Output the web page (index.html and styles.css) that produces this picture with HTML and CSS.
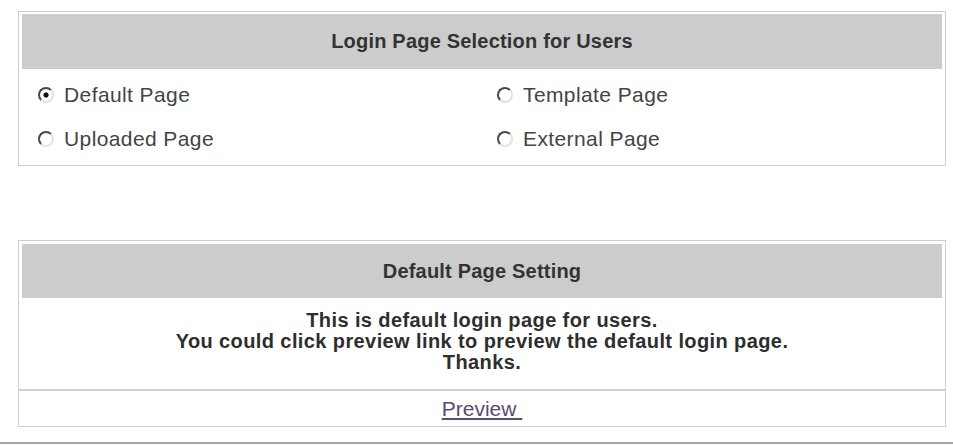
FILE: index.html
```html
<!DOCTYPE html>
<html lang="en">
<head>
    <meta charset="UTF-8">
    <meta name="viewport" content="width=device-width, initial-scale=1.0">
    <title>Login Page Selection</title>
    <link rel="stylesheet" href="styles.css">
</head>
<body>
    <div class="page">
        <div class="panel">
            <div class="panel-head">Login Page Selection for Users</div>
            <div class="choices">
                <label class="choice"><input type="radio" name="loginPage" value="default" checked> Default Page</label>
                <label class="choice"><input type="radio" name="loginPage" value="template"> Template Page</label>
                <label class="choice"><input type="radio" name="loginPage" value="uploaded"> Uploaded Page</label>
                <label class="choice"><input type="radio" name="loginPage" value="external"> External Page</label>
            </div>
        </div>

        <div class="panel panel-setting">
            <div class="panel-head">Default Page Setting</div>
            <div class="notice">
                This is default login page for users.<br>
                You could click preview link to preview the default login page.<br>
                Thanks.
            </div>
            <div class="preview-row">
                <a href="#" class="preview-link">Preview&nbsp;</a>
            </div>
        </div>
    </div>
    <div class="page-rule"></div>
</body>
</html>
```

FILE: styles.css
```css
* {
    margin: 0;
    padding: 0;
    box-sizing: border-box;
}

body {
    font-family: "Liberation Sans", Arial, sans-serif;
    background-color: white;
    color: #444;
}

.page {
    padding: 11px 0 0 18px;
}

.panel {
    width: 928px;
    border: 1px solid #cfcfcf;
}

.panel-setting {
    margin-top: 74px;
}

.panel-head {
    margin: 2px 3px 0 3px;
    height: 55px;
    background-color: #cccccc;
    display: flex;
    align-items: center;
    justify-content: center;
    font-size: 20px;
    font-weight: bold;
    letter-spacing: 0.2px;
    color: #333;
}

.panel-setting .panel-head {
    margin-top: 3px;
    height: 54px;
}

/* radio options, two per row */
.choices {
    display: grid;
    grid-template-columns: 459px 1fr;
    grid-auto-rows: 44px;
    padding: 4px 0;
}

.choice {
    display: flex;
    align-items: center;
    gap: 10px;
    padding-left: 19px;
    font-size: 21px;
    letter-spacing: 0.4px;
    color: #444;
    cursor: pointer;
}

.choice input {
    appearance: none;
    -webkit-appearance: none;
    width: 16px;
    height: 16px;
    margin: 0;
    border-radius: 50%;
    border: 2.5px solid;
    border-color: #4a4a4a #e2e2e2 #e2e2e2 #4a4a4a;
    background-color: white;
    flex-shrink: 0;
}

.choice input:checked {
    background: radial-gradient(circle, #111 0, #111 2.2px, white 3px);
}

.notice {
    padding: 12px 0 16px;
    text-align: center;
    font-size: 20px;
    line-height: 21px;
    font-weight: bold;
    letter-spacing: 0.4px;
    color: #2e2e2e;
}

.preview-row {
    border-top: 2px solid #d2d2d2;
    height: 37px;
    display: flex;
    align-items: center;
    justify-content: center;
}

.preview-link {
    font-size: 21px;
    color: #5c4a70;
    text-decoration: underline;
}

.page-rule {
    margin-top: 15px;
    height: 2px;
    background-color: #a4a4a4;
}
```
